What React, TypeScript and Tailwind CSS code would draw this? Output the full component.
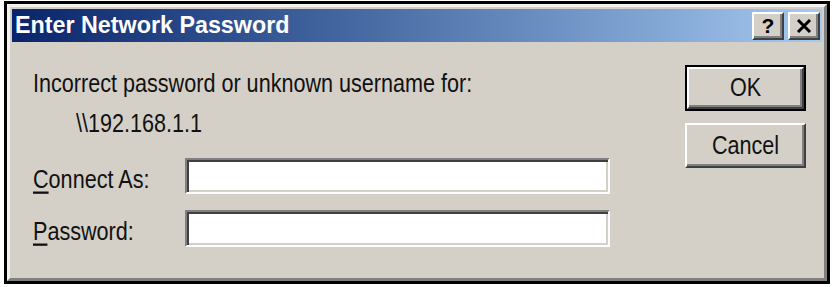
import React from "react";

const font = { fontFamily: '"Liberation Sans", Arial, sans-serif' };

function TitleButton({ children }: { children: React.ReactNode }) {
  return (
    <div className="w-[32px] h-[28px] flex items-center justify-center bg-[#d4d0c8] border-2 border-t-white border-l-white border-r-[#404040] border-b-[#404040] shadow-[inset_-2px_-2px_0_#808080]">
      {children}
    </div>
  );
}

function Label({ text, accent }: { text: string; accent: string }) {
  return (
    <span className="inline-block origin-center scale-y-[1.15]">
      <span className="underline underline-offset-[3px] decoration-[1.5px]">{accent}</span>
      {text}
    </span>
  );
}

export default function App() {
  return (
    <div className="w-[834px] h-[287px] bg-white pt-[1px] pl-[4px]" style={font}>
      <div className="w-[826px] h-[283px] border-[3px] border-black">
        <div className="h-full flex flex-col bg-[#d4d0c8] p-[2px] border-[3px] border-t-[#f4f2ee] border-l-[#f4f2ee] border-r-[#808080] border-b-[#808080]">
          {/* title bar */}
          <div className="h-[33px] flex items-center justify-between pl-[3px] pr-[2px] bg-gradient-to-r from-[#0a246a] to-[#a6caf0]">
            <span className="text-white font-bold text-[23.3px] leading-none">
              Enter Network Password
            </span>
            <div className="flex items-center gap-[4px]">
              <TitleButton>
                <span className="text-black font-bold text-[21px] leading-none">?</span>
              </TitleButton>
              <TitleButton>
                <svg width="16" height="14" viewBox="0 0 16 14">
                  <path d="M2 1 L14 13 M14 1 L2 13" stroke="#000" strokeWidth="3" />
                </svg>
              </TitleButton>
            </div>
          </div>

          {/* body */}
          <div className="flex-1 flex text-[#111] text-[21.6px] leading-[24px]">
            <div className="flex-1 flex flex-col pl-[21px] pt-[30px]">
              <span className="inline-block self-start scale-y-[1.15]">
                Incorrect password or unknown username for:
              </span>
              <span className="inline-block self-start mt-[16px] pl-[43px] scale-y-[1.15]">
                \\192.168.1.1
              </span>
              <div className="flex items-start mt-[22px]">
                <div className="w-[152px] pt-[10px]">
                  <Label accent="C" text="onnect As:" />
                </div>
                <div className="w-[425px] h-[36px] bg-white border-2 border-t-[#808080] border-l-[#808080] border-r-white border-b-white shadow-[inset_2px_2px_0_#404040,inset_-2px_-2px_0_#d4d0c8]" />
              </div>
              <div className="flex items-start mt-[16px]">
                <div className="w-[152px] pt-[10px]">
                  <Label accent="P" text="assword:" />
                </div>
                <div className="w-[425px] h-[37px] bg-white border-2 border-t-[#808080] border-l-[#808080] border-r-white border-b-white shadow-[inset_2px_2px_0_#404040,inset_-2px_-2px_0_#d4d0c8]" />
              </div>
            </div>

            <div className="w-[121px] mr-[16px] pt-[23px] flex flex-col gap-[12px]">
              <div className="h-[46px] border-2 border-black">
                <div className="h-full flex items-center justify-center border-2 border-t-white border-l-white border-r-[#404040] border-b-[#404040] shadow-[inset_-2px_-2px_0_#808080]">
                  <span className="inline-block scale-y-[1.15]">OK</span>
                </div>
              </div>
              <div className="h-[45px] flex items-center justify-center border-2 border-t-white border-l-white border-r-[#404040] border-b-[#404040] shadow-[inset_-2px_-2px_0_#808080]">
                <span className="inline-block scale-y-[1.15]">Cancel</span>
              </div>
            </div>
          </div>
        </div>
      </div>
    </div>
  );
}
